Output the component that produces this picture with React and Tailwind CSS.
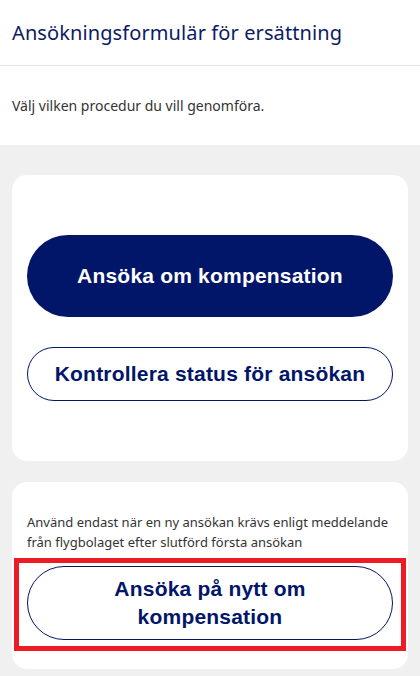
export default function App() {
  const seg = { fontFamily: '"Noto Sans", "Open Sans", sans-serif' };
  const arial = { fontFamily: '"Liberation Sans", Arial, sans-serif' };
  return (
    <div className="w-[420px] min-h-[676px] bg-[#f0f0f0]">
      <div className="bg-white">
        <div className="h-[66px] border-b border-[#e6e6e6] px-3 flex items-center">
          <h1 className="text-[20px] text-[#0b1b63] tracking-[0.1px]" style={seg}>
            Ansökningsformulär för ersättning
          </h1>
        </div>
        <div className="h-[79px] px-3 flex items-center">
          <p className="text-[14px] text-[#333]" style={seg}>
            Välj vilken procedur du vill genomföra.
          </p>
        </div>
      </div>
      <div className="px-3 pt-[30px] pb-[7px] flex flex-col gap-[21px]">
        <div className="bg-white rounded-[15px] px-[15px] py-[60px] flex flex-col gap-[30px]">
          <button
            className="h-[82px] w-full rounded-full bg-[#011669] text-white text-[21px] tracking-[0.2px] font-bold"
            style={arial}
          >
            Ansöka om kompensation
          </button>
          <button
            className="h-[54px] w-full rounded-full bg-white border border-[#011669] text-[#011669] text-[21px] tracking-[0.2px] font-bold"
            style={arial}
          >
            Kontrollera status för ansökan
          </button>
        </div>
        <div className="bg-white rounded-[15px] px-[15px] pt-[30px] pb-[29px] flex flex-col gap-[14px]">
          <p className="text-[13px] leading-[20px] text-[#333]" style={seg}>
            Använd endast när en ny ansökan krävs enligt meddelande från flygbolaget efter slutförd första ansökan
          </p>
          <div className="relative">
            <button
              className="h-[74px] w-full rounded-full bg-white border border-[#011669] text-[#011669] text-[21px] tracking-[0.2px] leading-[28px] font-bold px-[60px]"
              style={arial}
            >
              Ansöka på nytt om kompensation
            </button>
            <div className="absolute left-[-13px] right-[-13px] top-[-8px] bottom-[-11px] border-[5px] border-[#ed1c24] pointer-events-none" />
          </div>
        </div>
      </div>
    </div>
  );
}
